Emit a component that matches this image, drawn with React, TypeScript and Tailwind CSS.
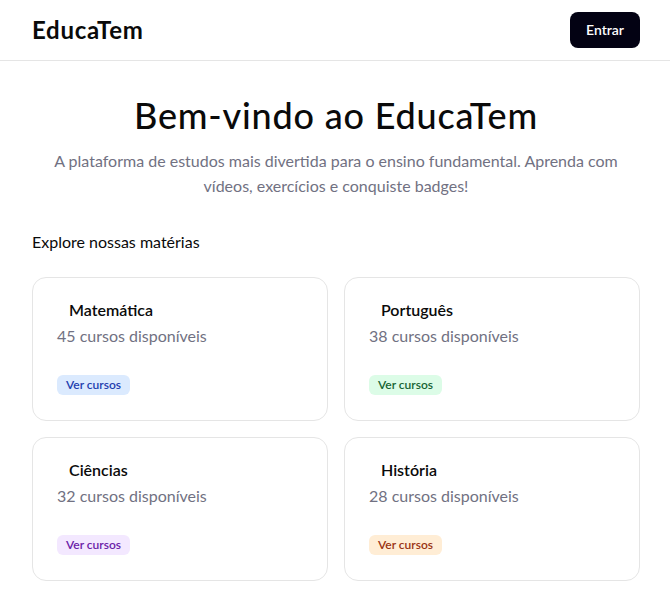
const subjects = [
  { name: 'Matemática', courses: 45, badge: 'bg-[#dbeafe] text-[#1e40af]' },
  { name: 'Português', courses: 38, badge: 'bg-[#dcfce7] text-[#166534]' },
  { name: 'Ciências', courses: 32, badge: 'bg-[#f3e8ff] text-[#6b21a8]' },
  { name: 'História', courses: 28, badge: 'bg-[#ffedd5] text-[#9a3412]' },
];

const App: React.FC = () => {
  return (
    <div
      className="min-h-screen bg-white text-[#0a0a0a]"
      style={{ fontFamily: '"Segoe UI", Lato, "Noto Sans", sans-serif' }}
    >
      <header className="h-[61px] border-b border-[#e5e5e5] flex items-center justify-between pl-8 pr-[30px]">
        <span className="text-2xl font-bold tracking-[0.03em]">EducaTem</span>
        <button className="w-[70px] h-9 rounded-lg bg-[#030213] text-white text-sm font-semibold">
          Entrar
        </button>
      </header>

      <main className="pl-8 pr-[30px] pt-[34px] pb-3">
        <h1 className="text-4xl leading-10 font-medium tracking-[0.022em] text-center">
          Bem-vindo ao EducaTem
        </h1>
        <p className="mt-[13px] text-base leading-[25px] text-[#717182] text-center max-w-[600px] mx-auto">
          A plataforma de estudos mais divertida para o ensino fundamental. Aprenda com vídeos,
          exercícios e conquiste badges!
        </p>

        <h2 className="mt-8 mb-[23px] text-base leading-6">Explore nossas matérias</h2>

        <div className="grid grid-cols-2 gap-4">
          {subjects.map((s) => (
            <div key={s.name} className="rounded-[14px] border border-[#e5e5e5] bg-white px-6 pt-5 pb-[25px]">
              <h3 className="pl-3 text-base leading-6 font-semibold">{s.name}</h3>
              <p className="mt-0.5 text-base leading-6 text-[#717182]">{s.courses} cursos disponíveis</p>
              <span
                className={`mt-[27px] inline-flex h-5 items-center rounded-md px-[9px] text-xs font-semibold ${s.badge}`}
              >
                Ver cursos
              </span>
            </div>
          ))}
        </div>
      </main>
    </div>
  );
};

export default App;
